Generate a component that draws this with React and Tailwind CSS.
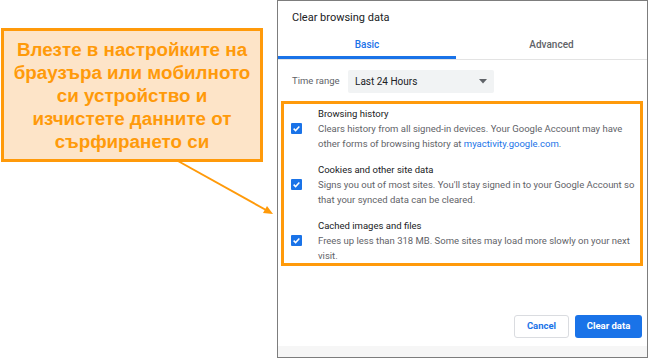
import React from "react";

function Check() {
  return (
    <div className="w-[11px] h-[11px] rounded-[1px] bg-[#1a73e8] flex items-center justify-center shrink-0">
      <svg width="9" height="9" viewBox="0 0 12 12">
        <path d="M2.2 6.2 L4.8 8.8 L9.8 3.4" fill="none" stroke="white" strokeWidth="2" />
      </svg>
    </div>
  );
}

function Item({ title, children }) {
  return (
    <div className="flex items-center">
      <div className="w-[34px] pl-[7px] flex"><Check /></div>
      <div>
        <div className="text-[#202124] leading-[15px]">{title}</div>
        <div className="text-[#5f6368] leading-[15px]">{children}</div>
      </div>
    </div>
  );
}

export default function App() {
  return (
    <div className="relative w-[650px] h-[359px] bg-white flex overflow-hidden">
      <div className="w-[277px] shrink-0 pt-[28px] pl-[1px]">
        <div className="w-[262px] h-[134px] bg-[#fde4c8] border-[3px] border-[#ff9a0a] flex items-center justify-center text-center text-[#ff9a0a] font-bold text-[18.8px] leading-[23px] font-['Liberation_Sans',Arial,sans-serif]">
          <p>
            Влезте в настройките на
            <br />
            браузъра или мобилното
            <br />
            си устройство и
            <br />
            изчистете данните от
            <br />
            сърфирането си
          </p>
        </div>
      </div>

      <div className="w-[371px] h-[358px] border border-[#7d7d7d] flex flex-col font-['Roboto',sans-serif] text-[9.5px]">
        <div className="pl-[14px] pt-[9px] h-[30px] text-[11px] text-[#202124]">Clear browsing data</div>
        <div className="flex h-[29px] border-b border-[#e3e3e3] text-[10px] font-medium">
          <div className="w-[178px] flex items-center justify-center text-[#1a73e8] border-b-[3px] border-[#1a73e8] pt-[2px]">Basic</div>
          <div className="flex-1 flex items-center justify-center text-[#5f6368] pb-[1px]">Advanced</div>
        </div>
        <div className="flex items-center h-[41px] pl-[14px] pt-[2px]">
          <span className="text-[#5f6368] w-[56px]">Time range</span>
          <div className="w-[146px] h-[23px] bg-[#f1f3f4] rounded-[2px] flex items-center justify-between pl-[7px] pr-[7px] text-[#202124] text-[10px]">
            <span>Last 24 Hours</span>
            <svg width="8" height="5" viewBox="0 0 8 5"><path d="M0 0 H8 L4 4.5 Z" fill="#5f6368" /></svg>
          </div>
        </div>
        <div className="ml-[3px] mr-[4px] h-[165px] border-[3px] border-[#ff9a0a] flex flex-col pt-[2px] gap-[11px]">
          <Item title="Browsing history">
            Clears history from all signed-in devices. Your Google Account may have
            <br />
            other forms of browsing history at <span className="text-[#1a73e8]">myactivity.google.com</span>.
          </Item>
          <Item title="Cookies and other site data">
            Signs you out of most sites. You'll stay signed in to your Google Account so
            <br />
            that your synced data can be cleared.
          </Item>
          <Item title="Cached images and files">
            Frees up less than 318 MB. Some sites may load more slowly on your next
            <br />
            visit.
          </Item>
        </div>
        <div className="flex-1 flex items-end justify-end gap-[6px] pr-[5px] pb-[8px]">
          <button className="w-[55px] h-[23px] border border-[#dadce0] rounded-[3px] text-[#1a73e8] font-bold text-[9.5px]">Cancel</button>
          <button className="w-[67px] h-[23px] bg-[#1a73e8] rounded-[3px] text-white font-bold text-[9.5px]">Clear data</button>
        </div>
        <div className="h-[11px] bg-[#f6f6f6]"></div>
      </div>

      <svg className="absolute left-0 top-0 pointer-events-none" width="650" height="359">
        <line x1="178" y1="161" x2="266" y2="210" stroke="#ff9a0a" strokeWidth="2" />
        <path d="M273 214 L263 213 L267 206 Z" fill="#ff9a0a" />
      </svg>
    </div>
  );
}
